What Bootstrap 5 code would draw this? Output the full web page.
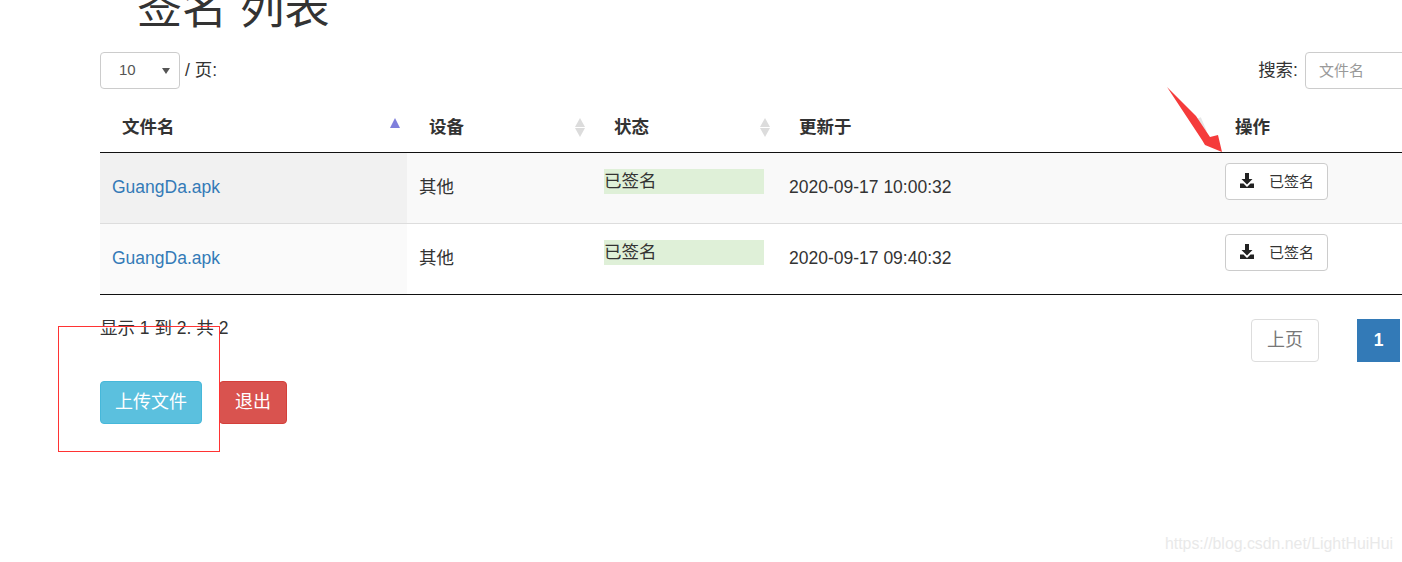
<!DOCTYPE html>
<html lang="zh">
<head>
<meta charset="utf-8">
<title>签名 列表</title>
<link href="https://cdn.jsdelivr.net/npm/bootstrap@5.3.0/dist/css/bootstrap.min.css" rel="stylesheet">
<style>
html,body{height:562px;overflow:hidden;background:#fff}
body{font-family:"Liberation Sans","Noto Sans CJK SC",sans-serif;font-size:17.5px;color:#333;position:relative}
.page-wrap{width:1333px;margin-left:100px}
.page-title{font-size:45px;line-height:50px;font-weight:400;color:#333;margin:-16px 0 18px 37px;font-family:inherit}
.toolbar{height:37px;margin-bottom:11px}
.len-group{gap:5px}
.search-group{gap:7px}
.len-select.form-select{width:80px;height:37px;font-size:15px;color:#555;padding:0 0 0 18px;border-color:#ccc;border-radius:4px;background-size:8px 6px;background-position:right 9px center;background-image:url("data:image/svg+xml,%3Csvg xmlns='http://www.w3.org/2000/svg' viewBox='0 0 8 6'%3E%3Cpath fill='%23555' d='M0 0h8L4 6z'/%3E%3C/svg%3E")}
.search-input.form-control{width:128px;height:37px;font-size:15px;padding:0 13px;border-color:#ccc;border-radius:4px}
.search-input::placeholder{color:#999}
.files-tbl{table-layout:fixed;width:1333px;margin:0;color:#333;border-collapse:collapse}
.table.files-tbl>thead>tr>th{height:52px;padding:3px 7px 0 22px;font-weight:700;font-size:17.5px;vertical-align:middle;border-bottom:1px solid #111;background:#fff;color:#333;box-shadow:none}
.table.files-tbl>tbody>tr>td{height:71px;padding:10px 12px;vertical-align:middle;font-size:17.5px;color:#333;box-shadow:none;border-bottom:1px solid #ddd}
.table.files-tbl>tbody>tr:last-child>td{border-bottom:1px solid #111}
.table.files-tbl>tbody>tr.odd-row>td{background:#f9f9f9}
.table.files-tbl>tbody>tr.odd-row>td.sorted{background:#f1f1f1}
.table.files-tbl>tbody>tr.even-row>td{background:#fff}
.table.files-tbl>tbody>tr.even-row>td.sorted{background:#fafafa}
.table.files-tbl>tbody>tr>td.act-cell{vertical-align:top}
.file-link{color:#337ab7;text-decoration:none}
.signed-tag{background:#dff0d8;line-height:25px;height:25px;width:160px;margin:1px 0 11px}
.signed-tag span{display:block;margin-top:-2px;line-height:25px}
.dl-btn.btn{display:inline-flex;align-items:center;width:103px;height:37px;padding:2px 0 0 14px;font-size:15px;color:#333;border:1px solid #ccc;border-radius:4px;background:#fff}
.dl-btn svg{margin:-3px 15px 0 0}
.foot-row{margin-top:20px;height:47px}
.pager{margin:4px 33px 0 0;gap:39px}
.pager .page-link{height:43px;font-size:18px;line-height:41px;padding:0;text-align:center;border:1px solid #ddd;color:#777;border-radius:4px}
.pager .page-item:first-child .page-link{width:68px;border-radius:4px}
.pager .page-item.active .page-link{width:43px;background:#337ab7;border-color:#337ab7;color:#fff;border-radius:0;font-size:17.5px;font-weight:700}
.act-row{margin-top:19px;gap:17px}
.act-btn.btn{height:43px;font-size:18px;line-height:1;color:#fff;padding:0;white-space:nowrap;border-radius:4px}
.up-btn.btn{background:#5bc0de;border:1px solid #46b8da;width:102px}
.quit-btn.btn{background:#d9534f;border:1px solid #d43f3a;width:68px}
.red-frame{position:absolute;left:58px;top:326px;width:162px;height:126px;border:1px solid #f33;pointer-events:none}
.red-arrow{position:absolute;left:1160px;top:80px;pointer-events:none}
.wmark{position:absolute;left:1165px;top:532px;font-size:15.85px;line-height:24px;color:#e9e9e9;white-space:nowrap}
</style>
</head>
<body>
<div class="page-wrap">
  <h1 class="page-title">签名 列表</h1>
  <div class="toolbar d-flex justify-content-between align-items-center">
    <div class="d-flex align-items-center len-group">
      <select class="form-select len-select"><option>10</option></select>
      <span>/ 页:</span>
    </div>
    <div class="d-flex align-items-center search-group">
      <span>搜索:</span>
      <input class="form-control search-input" placeholder="文件名">
    </div>
  </div>
  <table class="table files-tbl">
    <colgroup><col style="width:307px"><col style="width:185px"><col style="width:185px"><col style="width:436px"><col style="width:220px"></colgroup>
    <thead>
      <tr>
        <th><div class="d-flex justify-content-between align-items-center"><span>文件名</span><svg width="10" height="19" viewBox="0 0 10 19"><path fill="#7f7fdc" d="M5 0l5 10H0z"/></svg></div></th>
        <th><div class="d-flex justify-content-between align-items-center"><span>设备</span><svg width="10" height="19" viewBox="0 0 10 19"><path fill="#dcdcdc" d="M5 0l5 9H0zM0 10h10l-5 9z"/></svg></div></th>
        <th><div class="d-flex justify-content-between align-items-center"><span>状态</span><svg width="10" height="19" viewBox="0 0 10 19"><path fill="#dcdcdc" d="M5 0l5 9H0zM0 10h10l-5 9z"/></svg></div></th>
        <th>更新于</th>
        <th>操作</th>
      </tr>
    </thead>
    <tbody>
      <tr class="odd-row">
        <td class="sorted"><a class="file-link" href="#">GuangDa.apk</a></td>
        <td>其他</td>
        <td><div class="signed-tag"><span>已签名</span></div></td>
        <td>2020-09-17 10:00:32</td>
        <td class="act-cell"><a class="btn dl-btn" href="#"><svg width="14" height="15" viewBox="0 0 14 15"><path fill="#222" d="M5 0h4v6h3.500L7 11.500 1.500 6H5zM0 10.500h3.500L7 14l3.500-3.500H14V15H0z"/></svg>已签名</a></td>
      </tr>
      <tr class="even-row">
        <td class="sorted"><a class="file-link" href="#">GuangDa.apk</a></td>
        <td>其他</td>
        <td><div class="signed-tag"><span>已签名</span></div></td>
        <td>2020-09-17 09:40:32</td>
        <td class="act-cell"><a class="btn dl-btn" href="#"><svg width="14" height="15" viewBox="0 0 14 15"><path fill="#222" d="M5 0h4v6h3.500L7 11.500 1.500 6H5zM0 10.500h3.500L7 14l3.500-3.500H14V15H0z"/></svg>已签名</a></td>
      </tr>
    </tbody>
  </table>
  <div class="foot-row d-flex justify-content-between align-items-start">
    <div>显示 1 到 2. 共 2</div>
    <ul class="pagination pager">
      <li class="page-item"><a class="page-link" href="#">上页</a></li>
      <li class="page-item active"><a class="page-link" href="#">1</a></li>
    </ul>
  </div>
  <div class="act-row d-flex">
    <a class="btn act-btn up-btn d-flex align-items-center justify-content-center" href="#">上传文件</a>
    <a class="btn act-btn quit-btn d-flex align-items-center justify-content-center" href="#">退出</a>
  </div>
</div>
<div class="red-frame"></div>
<svg class="red-arrow" width="70" height="80" viewBox="0 0 70 80"><path d="M39 38l6 14" stroke="#e6e6e6" stroke-width="4" fill="none"/><path fill="#f53b3b" d="M7 7L36 36 50 57l8-2 4 17-17-7-3-5z"/></svg>
<div class="wmark">https://blog.csdn.net/LightHuiHui</div>
</body>
</html>
